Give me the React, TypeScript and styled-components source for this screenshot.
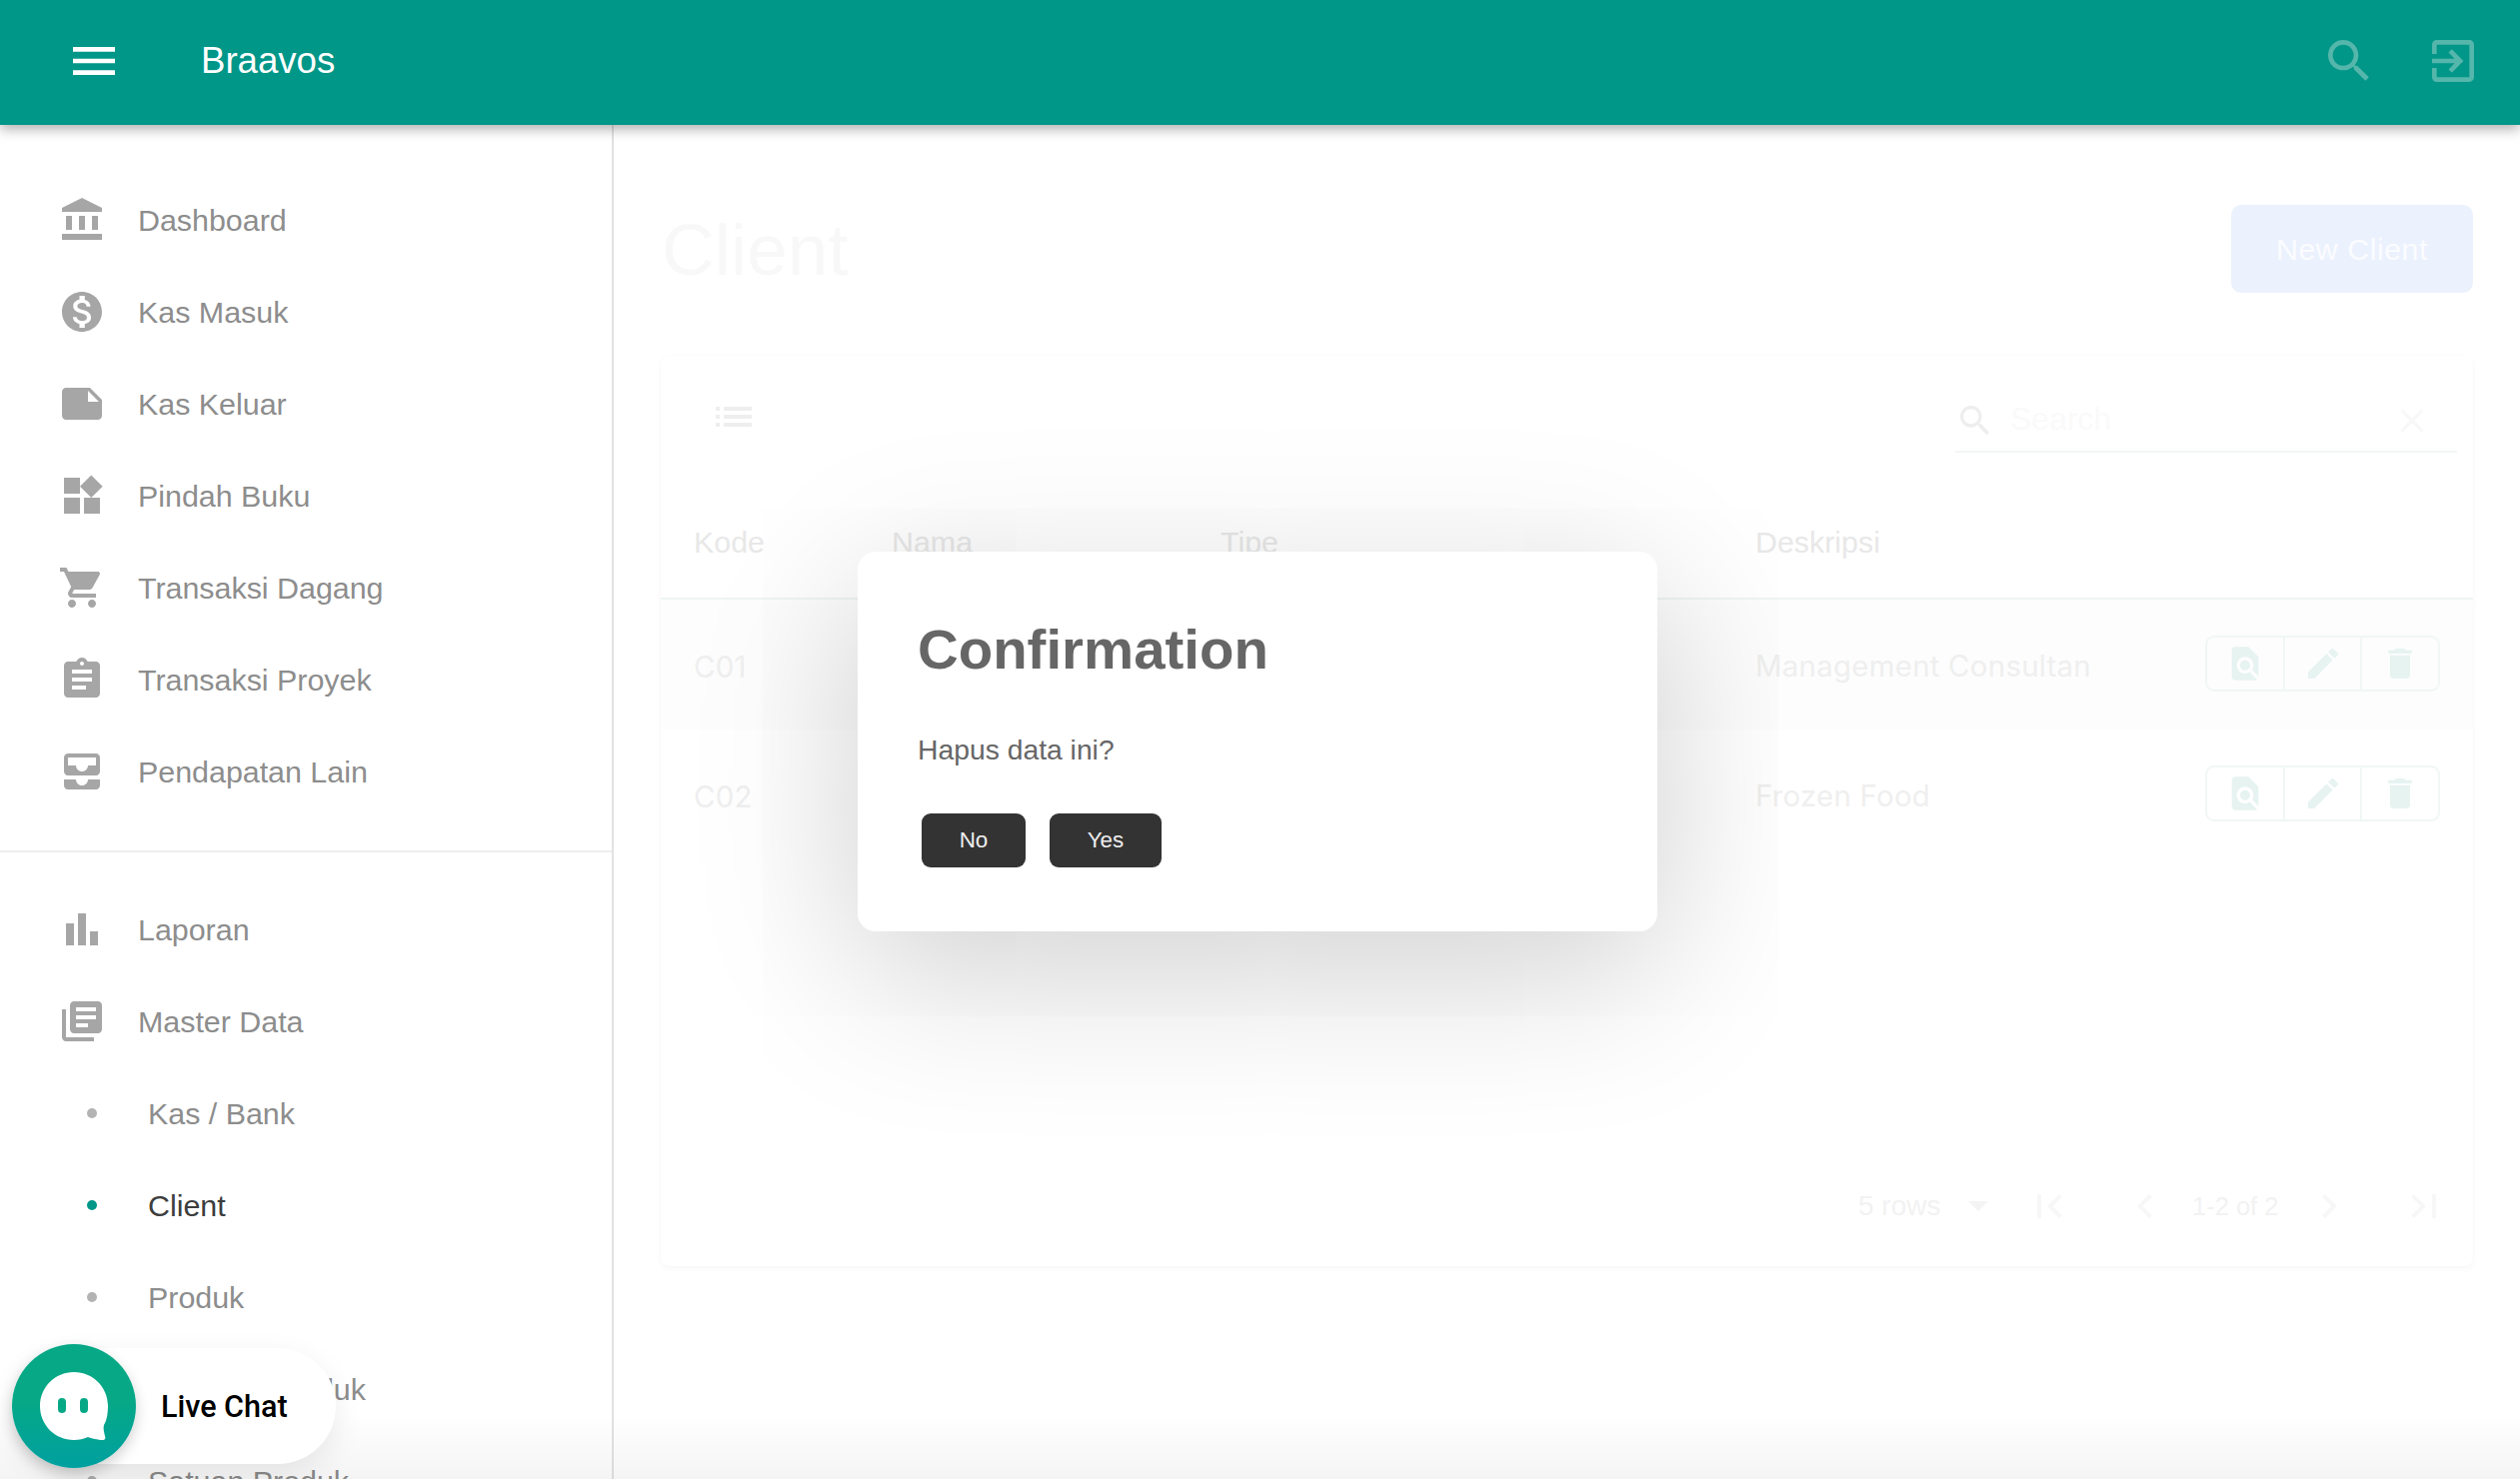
import React from "react";
import styled, { createGlobalStyle } from "styled-components";
import {
  MdAccountBalance,
  MdAllInbox,
  MdAssignment,
  MdBarChart,
  MdClose,
  MdDelete,
  MdEdit,
  MdExitToApp,
  MdFindInPage,
  MdFirstPage,
  MdChevronLeft,
  MdChevronRight,
  MdLastPage,
  MdLibraryBooks,
  MdList,
  MdMenu,
  MdMonetizationOn,
  MdNote,
  MdSearch,
  MdShoppingCart,
  MdWidgets,
} from "react-icons/md";
import { IconType } from "react-icons";

const GlobalStyle = createGlobalStyle`
  html, body {
    margin: 0;
    padding: 0;
    background: #fff;
    overflow: hidden;
  }
  * {
    box-sizing: border-box;
  }
`;

const Page = styled.div`
  position: relative;
  width: 2521px;
  height: 1480px;
  overflow: hidden;
  font-family: "Liberation Sans", Arial, sans-serif;
  background: #fff;
`;

const TopBar = styled.header`
  position: relative;
  z-index: 2;
  height: 125px;
  background: #009688;
  box-shadow: 0 4px 12px rgba(0, 0, 0, 0.32);
  display: flex;
  align-items: center;
  padding: 0 39px 3px 66px;
  color: #fff;
`;

const Brand = styled.div`
  margin-left: 79px;
  font-size: 36.6px;
  flex: 1;
`;

const TopActions = styled.div`
  display: flex;
  gap: 48px;
  color: #55b6ab;
`;

const Body = styled.div`
  display: flex;
  height: 1355px;
`;

const Sidebar = styled.aside`
  width: 614px;
  flex-shrink: 0;
  border-right: 2px solid #e2e2e2;
  overflow: hidden;
`;

const NavGroup = styled.nav`
  padding: 49px 0 33px;
  & + & {
    border-top: 2px solid #eeeeee;
    padding-top: 31px;
  }
`;

const NavItem = styled.div<{ $sub?: boolean; $active?: boolean }>`
  height: 92px;
  display: flex;
  align-items: center;
  padding-left: 58px;
  font-size: 30.4px;
  color: ${(p) => (p.$active ? "#3d3d3d" : "#8d8d8d")};
  svg {
    color: #a6a6a6;
    flex-shrink: 0;
  }
  span {
    margin-left: ${(p) => (p.$sub ? "0" : "32px")};
  }
`;

const Dot = styled.i<{ $active?: boolean }>`
  width: 10px;
  height: 10px;
  border-radius: 50%;
  margin: 0 51px 0 29px;
  background: ${(p) => (p.$active ? "#009688" : "#b3b3b3")};
`;

const Main = styled.main`
  flex: 1;
  min-width: 0;
  padding: 80px 47px 0;
`;

const TitleRow = styled.div`
  height: 88px;
  margin-bottom: 63px;
  display: flex;
  align-items: center;
  justify-content: space-between;
`;

const Title = styled.h1`
  margin: 0 0 0 1px;
  font-size: 73px;
  font-weight: 400;
  color: #f8f8f8;
`;

const NewButton = styled.button`
  width: 242px;
  height: 88px;
  border: none;
  border-radius: 10px;
  background: #ebf1fd;
  color: #fbfcff;
  font-family: inherit;
  font-size: 30.4px;
  letter-spacing: 0.5px;
  padding: 0;
`;

const Card = styled.section`
  height: 911px;
  border-radius: 8px;
  background: #fff;
  box-shadow: 0 3px 6px rgba(0, 0, 0, 0.03), 0 0 3px rgba(0, 0, 0, 0.025);
  display: flex;
  flex-direction: column;
`;

const Toolbar = styled.div`
  height: 130px;
  display: flex;
  align-items: flex-start;
  justify-content: space-between;
  padding: 37px 16px 0 49px;
  color: #eeeeee;
`;

const SearchBox = styled.div`
  width: 502px;
  height: 52px;
  margin-top: 8px;
  padding: 0 25px 0 0;
  border-bottom: 2px solid #f4f6f6;
  display: flex;
  align-items: flex-start;
  color: #eeeeee;
`;

const Placeholder = styled.span`
  flex: 1;
  margin-left: 15px;
  font-size: 32px;
  line-height: 36px;
  color: #fafafa;
`;

const ClearIcon = styled(MdClose)`
  color: #f8f8f8;
`;

const Row = styled.div<{ $kind: "head" | "odd" | "even" }>`
  display: grid;
  grid-template-columns: 198px 329px 535px 1fr;
  align-items: center;
  height: ${(p) => (p.$kind === "head" ? "114px" : "130px")};
  background: ${(p) => (p.$kind === "odd" ? "#fdfdfd" : "#fff")};
  border-bottom: ${(p) => (p.$kind === "head" ? "2px solid #eef5f4" : "none")};
`;

const HeadCell = styled.div`
  padding-left: 33px;
  font-size: 30.4px;
  color: #e8e8e8;
`;

const Cell = styled.div`
  padding: 3px 0 0 33px;
  font-family: "Inter", "Liberation Sans", sans-serif;
  font-size: 29.5px;
  letter-spacing: 0.2px;
  color: #efefef;
`;

const ActionCell = styled.div`
  padding: 0 33px 3px 33px;
  display: flex;
  align-items: center;
  justify-content: space-between;
  font-family: "Inter", "Liberation Sans", sans-serif;
  font-size: 29.5px;
  letter-spacing: 0.2px;
  color: #efefef;
`;

const Description = styled.span`
  padding-top: 5px;
`;

const ActionGroup = styled.div`
  display: flex;
  width: 235px;
  height: 56px;
  border: 2px solid #f0f7f6;
  border-radius: 9px;
  color: #e6f3f1;
`;

const ActionButton = styled.div`
  flex: 1;
  display: flex;
  align-items: center;
  justify-content: center;
  & + & {
    border-left: 2px solid #f0f7f6;
  }
`;

const Spacer = styled.div`
  flex: 1;
`;

const Pager = styled.div`
  height: 120px;
  display: flex;
  align-items: center;
  color: #f7f7f7;
`;

const PagerText = styled.span<{ $left: number; $width: number; $size: number }>`
  margin-left: ${(p) => p.$left}px;
  width: ${(p) => p.$width}px;
  white-space: nowrap;
  font-size: ${(p) => p.$size}px;
  color: #f2f2f2;
`;

const PagerIcon = styled.div<{ $left: number }>`
  margin-left: ${(p) => p.$left}px;
  height: 48px;
  display: flex;
  align-items: center;
`;

const DropArrow = styled.i`
  width: 0;
  height: 0;
  margin-left: 28px;
  border-left: 10px solid transparent;
  border-right: 10px solid transparent;
  border-top: 10px solid #f4f4f4;
`;

const BottomFade = styled.div`
  position: absolute;
  left: 0;
  right: 0;
  bottom: 0;
  height: 66px;
  z-index: 1;
  pointer-events: none;
  background: linear-gradient(rgba(0, 0, 0, 0), rgba(0, 0, 0, 0.045));
`;

const Dialog = styled.div`
  position: absolute;
  z-index: 3;
  left: 858px;
  top: 552px;
  width: 800px;
  height: 380px;
  padding: 61px 60px 0;
  background: #fff;
  border-radius: 18px;
  box-shadow: 0 40px 170px rgba(0, 0, 0, 0.2);
`;

const DialogTitle = styled.h2`
  margin: 0;
  font-size: 56.4px;
  line-height: 74px;
  font-weight: 700;
  color: #666;
`;

const DialogText = styled.p`
  margin: 45px 0 0;
  font-size: 28.3px;
  line-height: 36px;
  color: #666;
`;

const DialogActions = styled.div`
  margin: 46px 0 0 4px;
  display: flex;
  gap: 24px;
`;

const DialogButton = styled.button<{ $width: number }>`
  width: ${(p) => p.$width}px;
  height: 54px;
  padding: 0;
  border: none;
  border-radius: 9px;
  background: #333;
  color: #eee;
  font-family: inherit;
  font-size: 22.4px;
`;

const ChatWidget = styled.div`
  position: absolute;
  z-index: 4;
  left: 12px;
  top: 1345px;
  width: 324px;
  height: 124px;
  display: flex;
  align-items: center;
`;

const ChatPill = styled.div`
  position: absolute;
  left: 0;
  right: 0;
  top: 4px;
  height: 116px;
  padding-left: 149px;
  display: flex;
  align-items: center;
  border-radius: 58px;
  background: #fff;
  box-shadow: 0 10px 30px rgba(0, 0, 0, 0.08);
  font-family: Roboto, "Liberation Sans", sans-serif;
  font-size: 30.5px;
  font-weight: 500;
  color: #000;
`;

const ChatCircle = styled.div`
  position: relative;
  width: 124px;
  height: 124px;
  border-radius: 50%;
  background: linear-gradient(#06a886 45%, #00a0a0);
  box-shadow: 0 6px 14px rgba(0, 0, 0, 0.18);
  display: flex;
  align-items: center;
  justify-content: center;
`;

const mainNav: { label: string; icon: IconType }[] = [
  { label: "Dashboard", icon: MdAccountBalance },
  { label: "Kas Masuk", icon: MdMonetizationOn },
  { label: "Kas Keluar", icon: MdNote },
  { label: "Pindah Buku", icon: MdWidgets },
  { label: "Transaksi Dagang", icon: MdShoppingCart },
  { label: "Transaksi Proyek", icon: MdAssignment },
  { label: "Pendapatan Lain", icon: MdAllInbox },
];

const masterItems = ["Kas / Bank", "Client", "Produk", "Kategori Produk", "Satuan Produk"];

const rows = [
  { code: "C01", desc: "Management Consultan", kind: "odd" as const },
  { code: "C02", desc: "Frozen Food", kind: "even" as const },
];

const App: React.FC = () => {
  return (
    <Page>
      <GlobalStyle />
      <TopBar>
        <MdMenu size={56} />
        <Brand>Braavos</Brand>
        <TopActions>
          <MdSearch size={56} />
          <MdExitToApp size={56} />
        </TopActions>
      </TopBar>
      <Body>
        <Sidebar>
          <NavGroup>
            {mainNav.map((item) => (
              <NavItem key={item.label}>
                <item.icon size={48} />
                <span>{item.label}</span>
              </NavItem>
            ))}
          </NavGroup>
          <NavGroup>
            <NavItem>
              <MdBarChart size={48} />
              <span>Laporan</span>
            </NavItem>
            <NavItem>
              <MdLibraryBooks size={48} />
              <span>Master Data</span>
            </NavItem>
            {masterItems.map((label) => (
              <NavItem key={label} $sub $active={label === "Client"}>
                <Dot $active={label === "Client"} />
                <span>{label}</span>
              </NavItem>
            ))}
          </NavGroup>
        </Sidebar>
        <Main>
          <TitleRow>
            <Title>Client</Title>
            <NewButton>New Client</NewButton>
          </TitleRow>
          <Card>
            <Toolbar>
              <MdList size={48} />
              <SearchBox>
                <MdSearch size={40} />
                <Placeholder>Search</Placeholder>
                <ClearIcon size={40} />
              </SearchBox>
            </Toolbar>
            <Row $kind="head">
              <HeadCell>Kode</HeadCell>
              <HeadCell>Nama</HeadCell>
              <HeadCell>Tipe</HeadCell>
              <HeadCell>Deskripsi</HeadCell>
            </Row>
            {rows.map((row) => (
              <Row key={row.code} $kind={row.kind}>
                <Cell>{row.code}</Cell>
                <Cell />
                <Cell />
                <ActionCell>
                  <Description>{row.desc}</Description>
                  <ActionGroup>
                    <ActionButton>
                      <MdFindInPage size={40} />
                    </ActionButton>
                    <ActionButton>
                      <MdEdit size={40} />
                    </ActionButton>
                    <ActionButton>
                      <MdDelete size={40} />
                    </ActionButton>
                  </ActionGroup>
                </ActionCell>
              </Row>
            ))}
            <Spacer />
            <Pager>
              <PagerText $left={1198} $width={82} $size={28}>5 rows</PagerText>
              <DropArrow />
              <PagerIcon $left={37}>
                <MdFirstPage size={48} />
              </PagerIcon>
              <PagerIcon $left={48}>
                <MdChevronLeft size={48} />
              </PagerIcon>
              <PagerText $left={23} $width={88} $size={25.5}>1-2 of 2</PagerText>
              <PagerIcon $left={25}>
                <MdChevronRight size={48} />
              </PagerIcon>
              <PagerIcon $left={47}>
                <MdLastPage size={48} />
              </PagerIcon>
            </Pager>
          </Card>
        </Main>
      </Body>
      <BottomFade />
      <Dialog>
        <DialogTitle>Confirmation</DialogTitle>
        <DialogText>Hapus data ini?</DialogText>
        <DialogActions>
          <DialogButton $width={104}>No</DialogButton>
          <DialogButton $width={112}>Yes</DialogButton>
        </DialogActions>
      </Dialog>
      <ChatWidget>
        <ChatPill>Live Chat</ChatPill>
        <ChatCircle>
          <svg width="70" height="70" viewBox="0 0 70 70">
            <path
              d="M35 1C16 1 1 16 1 35s15 34 34 34c5 0 10-1 14-3 3 1 10 3 15 3 2 0 3-2 2-4-1-4-2-8-1-11 3-5 4-12 4-19C69 16 54 1 35 1z"
              fill="#fff"
            />
            <rect x="19" y="27" width="8" height="15" rx="4" fill="#06a886" />
            <rect x="41" y="27" width="8" height="15" rx="4" fill="#06a886" />
          </svg>
        </ChatCircle>
      </ChatWidget>
    </Page>
  );
};

export default App;
